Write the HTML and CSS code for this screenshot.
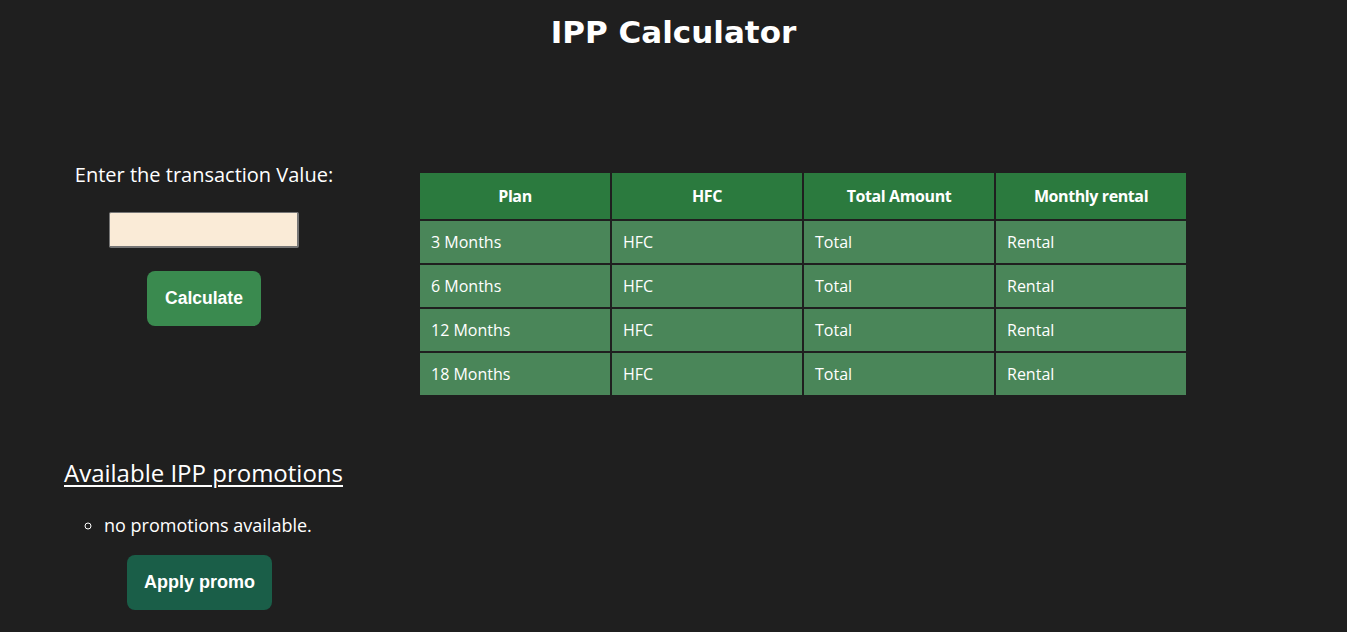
FILE: index.html
```html
<!DOCTYPE html>
<html>
<head>
<meta charset="utf-8">
<link rel="stylesheet" href="styles.css">
<title>IPP Calculator</title>
</head>
<body>
<h1 class="title">IPP Calculator</h1>
<div class="main">
  <div class="calc">
    <label class="calc-label" for="amount">Enter the transaction Value:</label>
    <input class="calc-input" id="amount" type="text">
    <button class="btn btn-calc">Calculate</button>
  </div>
  <table class="plans">
    <thead>
      <tr><th>Plan</th><th>HFC</th><th>Total Amount</th><th>Monthly rental</th></tr>
    </thead>
    <tbody>
      <tr><td>3 Months</td><td>HFC</td><td>Total</td><td>Rental</td></tr>
      <tr><td>6 Months</td><td>HFC</td><td>Total</td><td>Rental</td></tr>
      <tr><td>12 Months</td><td>HFC</td><td>Total</td><td>Rental</td></tr>
      <tr><td>18 Months</td><td>HFC</td><td>Total</td><td>Rental</td></tr>
    </tbody>
  </table>
</div>
<div class="promos">
  <h2 class="promos-title">Available IPP promotions</h2>
  <ul class="promo-list">
    <li>no promotions available.</li>
  </ul>
  <button class="btn btn-promo">Apply promo</button>
</div>
</body>
</html>
```
FILE: styles.css
```css
html, body {
  margin: 0;
  padding: 0;
  background: #1f1f1f;
  color: #ffffff;
  font-family: "Open Sans", "Noto Sans", sans-serif;
}
.title {
  margin: 0;
  padding-top: 12px;
  height: 40px;
  text-align: center;
  font-family: "DejaVu Sans", sans-serif;
  font-weight: bold;
  font-size: 31px;
  line-height: 40px;
}
.main {
  display: flex;
  align-items: flex-start;
  margin-top: 109px;
}
.calc {
  width: 408px;
  display: flex;
  flex-direction: column;
  align-items: center;
}
.calc-label {
  font-size: 20px;
  line-height: 28px;
}
.calc-input {
  margin-top: 23px;
  width: 190px;
  height: 36px;
  box-sizing: border-box;
  background: #faebd7;
  border: 1px solid #767676;
  border-width: 1px 2px 2px 1px;
  border-radius: 2px;
  outline: none;
}
.btn {
  border: none;
  color: #ffffff;
  font-family: "Liberation Sans", Arial, sans-serif;
  font-weight: bold;
  font-size: 17.5px;
  border-radius: 8px;
  height: 55px;
  cursor: pointer;
}
.btn-calc {
  margin-top: 23px;
  width: 114px;
  background: #3a8a4f;
}
.plans {
  margin-left: 10px;
  margin-top: 10px;
  border-collapse: separate;
  border-spacing: 2px;
  font-size: 16px;
}
.plans th, .plans td {
  width: 190px;
  box-sizing: border-box;
}
.plans th {
  background: #2b7a3e;
  height: 46px;
  font-weight: bold;
  text-align: center;
  letter-spacing: -0.4px;
}
.plans td {
  background: #4a8659;
  height: 42px;
  padding: 0 11px;
  text-align: left;
}
.promos {
  padding-left: 64px;
  margin-top: 58px;
}
.promos-title {
  margin: 0;
  font-weight: normal;
  font-size: 24px;
  line-height: 36px;
  text-decoration: underline;
  text-decoration-thickness: 2px;
  text-underline-offset: 3px;
}
.promo-list {
  margin: 22px 0 0;
  padding-left: 40px;
  list-style-type: circle;
  font-size: 18px;
  line-height: 24px;
}
.btn-promo {
  margin: 18px 0 0 63px;
  width: 145px;
  font-size: 18px;
  background: #1a5e48;
}
```
